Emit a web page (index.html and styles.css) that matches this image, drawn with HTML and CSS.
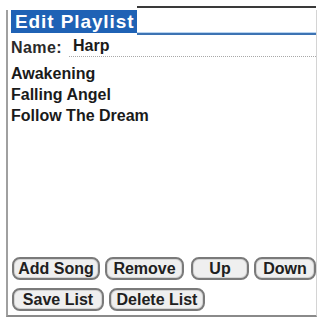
FILE: index.html
```html
<!DOCTYPE html>
<html>
<head>
<meta charset="utf-8">
<link rel="stylesheet" href="styles.css">
</head>
<body>
<div class="frame">
  <div class="titlebar">
    <div class="tab">Edit Playlist</div>
    <div class="titleline"></div>
  </div>
  <div class="namerow">
    <span class="label">Name:</span>
    <span class="field">Harp</span>
  </div>
  <ul class="songs">
    <li>Awakening</li>
    <li>Falling Angel</li>
    <li>Follow The Dream</li>
  </ul>
  <div class="buttons">
    <div class="row">
      <div class="btn w-add">Add Song</div>
      <div class="btn w-remove">Remove</div>
      <div class="btn w-up">Up</div>
      <div class="btn w-down">Down</div>
    </div>
    <div class="row">
      <div class="btn w-save">Save List</div>
      <div class="btn w-delete">Delete List</div>
    </div>
  </div>
</div>
</body>
</html>
```
FILE: styles.css
```css
html, body {
  margin: 0;
  padding: 0;
  background: #ffffff;
}
body {
  width: 321px;
  height: 320px;
  overflow: hidden;
  font-family: "Liberation Sans", Arial, sans-serif;
  color: #1a1a1a;
}
.frame {
  margin: 10px 4px 0 6px;
  height: 305px;
  border-left: 2px solid #a0a0a0;
  border-right: 1px solid #d4d4d4;
  border-bottom: 2px solid #8a8a8a;
  display: flex;
  flex-direction: column;
}
.titlebar {
  display: flex;
  height: 25px;
}
.tab {
  margin-left: 3px;
  width: 126px;
  height: 23px;
  background: #1f62b5;
  color: #ffffff;
  font-weight: bold;
  font-size: 19px;
  line-height: 23px;
  padding-left: 4px;
  box-sizing: border-box;
  white-space: nowrap;
  letter-spacing: 0.9px;
}
.titleline {
  flex: 1;
  margin-top: -4px;
  height: 29px;
  box-sizing: border-box;
  border-top: 2px solid #3a3a3a;
  border-bottom: 2px solid #3d73b3;
  box-shadow: inset 0 -1px 0 #b7d3f0;
}
.namerow {
  display: flex;
  align-items: flex-end;
  height: 21px;
  padding-left: 3px;
  margin-top: 1px;
  font-size: 16px;
  font-weight: bold;
}
.label {
  width: 58px;
  color: #2a2a2a;
  letter-spacing: 0.4px;
}
.field {
  flex: 1;
  border-bottom: 1px dotted #a8a8a8;
  padding-left: 4px;
  padding-bottom: 1px;
}
.songs {
  list-style: none;
  margin: 6px 0 0 0;
  padding: 0 0 0 3px;
  font-size: 16px;
  font-weight: bold;
  flex: 1;
}
.songs li {
  height: 21px;
  line-height: 21px;
}
.buttons {
  padding: 0 0 4px 4px;
  display: flex;
  flex-direction: column;
  gap: 8px;
}
.row {
  display: flex;
  gap: 5px;
}
.btn {
  height: 23px;
  box-sizing: border-box;
  border: 2px solid #7a7a7a;
  border-radius: 8px;
  background: #efefef;
  font-size: 16px;
  font-weight: bold;
  line-height: 19px;
  text-align: center;
  color: #202020;
  white-space: nowrap;
  box-shadow: inset 0 0 0 1px #d4d4d4;
}
.w-add { width: 88px; }
.w-remove { width: 79px; }
.w-up { width: 58px; margin-left: 2px; }
.w-down { width: 62px; }
.w-save { width: 92px; }
.w-delete { width: 96px; }
```
